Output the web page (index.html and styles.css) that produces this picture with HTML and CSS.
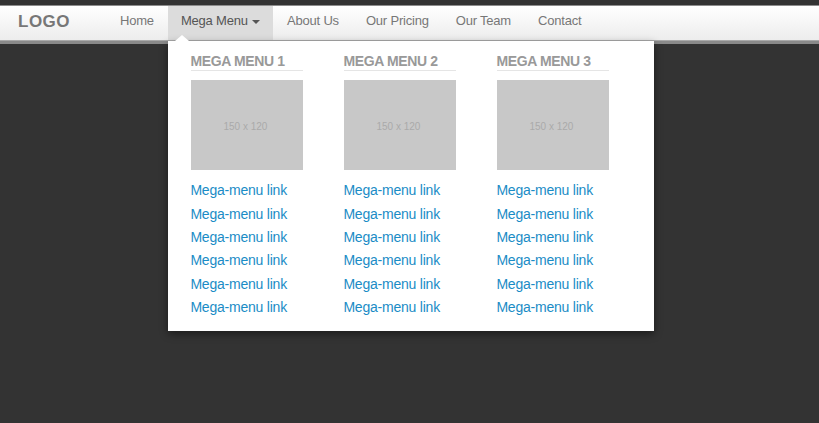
FILE: index.html
```html
<!DOCTYPE html>
<html lang="en">
<head>
<meta charset="utf-8">
<title>Mega Menu</title>
<link rel="stylesheet" href="styles.css">
</head>
<body>
<nav class="navbar">
  <a class="brand">LOGO</a>
  <ul class="nav">
    <li class="item"><a>Home</a></li>
    <li class="item open"><a>Mega Menu <span class="caret"></span></a>
      <div class="mega">
        <div class="col">
          <h4 class="title">MEGA MENU 1</h4>
          <div class="thumb">150 x 120</div>
          <ul class="links">
            <li>Mega-menu link</li><li>Mega-menu link</li><li>Mega-menu link</li><li>Mega-menu link</li><li>Mega-menu link</li><li>Mega-menu link</li>
          </ul>
        </div>
        <div class="col">
          <h4 class="title">MEGA MENU 2</h4>
          <div class="thumb">150 x 120</div>
          <ul class="links">
            <li>Mega-menu link</li><li>Mega-menu link</li><li>Mega-menu link</li><li>Mega-menu link</li><li>Mega-menu link</li><li>Mega-menu link</li>
          </ul>
        </div>
        <div class="col">
          <h4 class="title">MEGA MENU 3</h4>
          <div class="thumb">150 x 120</div>
          <ul class="links">
            <li>Mega-menu link</li><li>Mega-menu link</li><li>Mega-menu link</li><li>Mega-menu link</li><li>Mega-menu link</li><li>Mega-menu link</li>
          </ul>
        </div>
      </div>
    </li>
    <li class="item"><a>About Us</a></li>
    <li class="item"><a>Our Pricing</a></li>
    <li class="item"><a>Our Team</a></li>
    <li class="item"><a>Contact</a></li>
  </ul>
</nav>
</body>
</html>
```
FILE: styles.css
```css
* { box-sizing: border-box; }
html, body { margin: 0; height: 100%; }
body {
  background: #333;
  padding-top: 5px;
  overflow: hidden;
  font-family: "Liberation Sans", Arial, sans-serif;
}
.navbar {
  display: flex;
  height: 39px;
  background: linear-gradient(#fff, #ececec);
  border-top: 1px solid #8c8c8c;
  border-bottom: 3px solid #8a8a8a;
  box-shadow: inset 0 -1px 0 #aaa;
}
.brand {
  width: 106.5px;
  padding-left: 18px;
  font-size: 17px;
  font-weight: bold;
  letter-spacing: .5px;
  line-height: 32px;
  color: #777;
}
.nav { display: flex; margin: 0; padding: 0; list-style: none; }
.item { position: relative; }
.item > a {
  display: block;
  height: 34px;
  padding: 0 13.5px;
  font-size: 13px;
  letter-spacing: -.2px;
  line-height: 30px;
  color: #777;
}
.open { margin: 0 .9px 0 1px; }
.item.open > a { padding: 0 12.5px; background: #dcdcdc; color: #555; }
.caret {
  display: inline-block;
  width: 0;
  height: 0;
  margin-left: 1px;
  vertical-align: middle;
  border-top: 4px solid #555;
  border-left: 4px solid transparent;
  border-right: 4px solid transparent;
}
.mega {
  position: absolute;
  top: 35px;
  left: 0;
  width: 486px;
  height: 290px;
  display: flex;
  padding: 13px 0 0 23px;
  background: #fff;
  box-shadow: 0 3px 8px rgba(0, 0, 0, .45);
}
.mega::before {
  content: "";
  position: absolute;
  top: -6px;
  left: 7px;
  border-left: 7px solid transparent;
  border-right: 7px solid transparent;
  border-bottom: 6px solid #fff;
}
.col { width: 153px; }
.title {
  width: 112px;
  margin: 0 0 9px;
  height: 17px;
  font-size: 14px;
  letter-spacing: -.35px;
  text-indent: -1px;
  line-height: 15px;
  font-weight: bold;
  color: #999;
  border-bottom: 1px solid #e5e5e5;
}
.thumb {
  width: 112px;
  height: 90px;
  background: #c8c8c8;
  color: #aaa;
  font-size: 10px;
  line-height: 93px;
  text-indent: -4px;
  text-align: center;
}
.links {
  margin: 9.2px 0 0 -1px;
  padding: 0;
  list-style: none;
  font-size: 14px;
  letter-spacing: -.22px;
  line-height: 23.4px;
  color: #1a8cc6;
}
```
